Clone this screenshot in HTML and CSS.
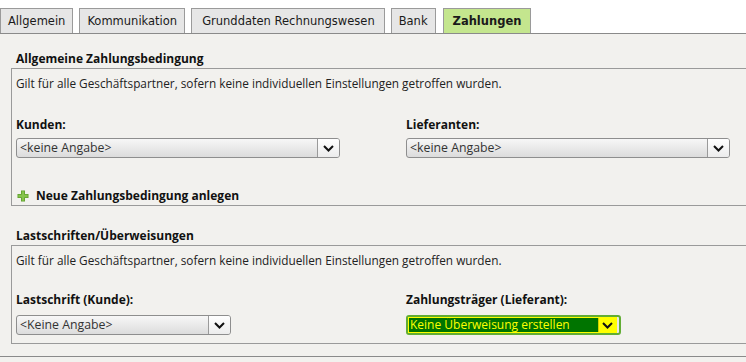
FILE: index.html
```html
<!DOCTYPE html>
<html lang="de">
<head>
<meta charset="utf-8">
<title>Zahlungen</title>
<link rel="stylesheet" href="styles.css">
</head>
<body>
<div class="tabs">
  <div class="tab">Allgemein</div>
  <div class="tab">Kommunikation</div>
  <div class="tab tab-long">Grunddaten Rechnungswesen</div>
  <div class="tab">Bank</div>
  <div class="tab active">Zahlungen</div>
</div>
<div class="panel">
  <section class="group">
    <h2 class="group-title">Allgemeine Zahlungsbedingung</h2>
    <div class="box box-first">
      <p class="note">Gilt für alle Geschäftspartner, sofern keine individuellen Einstellungen getroffen wurden.</p>
      <div class="fields">
        <div class="field">
          <div class="label">Kunden:</div>
          <div class="select wide"><span class="value">&lt;keine Angabe&gt;</span><span class="arrow"><svg width="11" height="7" viewBox="0 0 11 7"><path d="M1 1 L5.5 5.5 L10 1" fill="none" stroke="#111" stroke-width="2"/></svg></span></div>
        </div>
        <div class="field">
          <div class="label">Lieferanten:</div>
          <div class="select wide"><span class="value">&lt;keine Angabe&gt;</span><span class="arrow"><svg width="11" height="7" viewBox="0 0 11 7"><path d="M1 1 L5.5 5.5 L10 1" fill="none" stroke="#111" stroke-width="2"/></svg></span></div>
        </div>
      </div>
      <div class="add">
        <svg class="plus" width="12" height="12" viewBox="0 0 12 12"><path d="M4 0.5 H8 V4 H11.5 V8 H8 V11.5 H4 V8 H0.5 V4 H4 Z" fill="#5e9f2c"/><path d="M4.8 1.3 H7.2 V4.8 H10.7 V7.2 H7.2 V10.7 H4.8 V7.2 H1.3 V4.8 H4.8 Z" fill="#86c34c"/></svg>
        <span>Neue Zahlungsbedingung anlegen</span>
      </div>
    </div>
  </section>
  <section class="group group-second">
    <h2 class="group-title">Lastschriften/Überweisungen</h2>
    <div class="box box-second">
      <p class="note">Gilt für alle Geschäftspartner, sofern keine individuellen Einstellungen getroffen wurden.</p>
      <div class="fields">
        <div class="field">
          <div class="label">Lastschrift (Kunde):</div>
          <div class="select narrow"><span class="value">&lt;Keine Angabe&gt;</span><span class="arrow"><svg width="11" height="7" viewBox="0 0 11 7"><path d="M1 1 L5.5 5.5 L10 1" fill="none" stroke="#111" stroke-width="2"/></svg></span></div>
        </div>
        <div class="field">
          <div class="label">Zahlungsträger (Lieferant):</div>
          <div class="select narrow focus"><span class="focus-frame"><span class="value">Keine Überweisung erstellen</span><span class="arrow"><svg width="11" height="7" viewBox="0 0 11 7"><path d="M1 1 L5.5 5.5 L10 1" fill="none" stroke="#111" stroke-width="2"/></svg></span></span></div>
        </div>
      </div>
    </div>
  </section>
</div>
</body>
</html>
```
FILE: styles.css
```css
html, body {
  margin: 0;
  padding: 0;
}
body {
  background: #f2f1ee;
  font-family: "Open Sans", "Noto Sans", sans-serif;
  font-size: 11.8px;
  color: #1a1a1a;
  overflow: hidden;
}
.tabs {
  display: flex;
  gap: 6px;
  padding-top: 8px;
  background: #ffffff;
  height: 25px;
  box-sizing: content-box;
}
.tab {
  font-family: "DejaVu Sans", sans-serif;
  font-size: 11.5px;
  line-height: 24px;
  height: 25px;
  box-sizing: border-box;
  padding: 0 7px;
  border: 1px solid #9a9a9a;
  border-bottom: none;
  background: #e6e6e6;
  color: #1a1a1a;
}
.tab.tab-long {
  padding: 0 9px 0 10px;
}
.tab.active {
  background: #c4e68e;
  font-weight: bold;
  padding: 0 9px;
  margin-left: 1px;
}
.panel {
  border-top: 1px solid #8a8a8a;
  border-bottom: 1px solid #8a8a8a;
  padding: 17px 0 12px 11px;
}
.group-title {
  margin: 0 0 1px 5px;
  font-size: 12px;
  font-weight: bold;
  line-height: 16px;
  color: #111;
}
.group-second {
  margin-top: 22px;
}
.box {
  border: 1px solid #9a9a9a;
  border-right: none;
  padding: 6px 0 1px 4px;
}
.box-second {
  padding-bottom: 8px;
}
.note {
  margin: 0;
  line-height: 16px;
  color: #222;
}
.fields {
  display: grid;
  grid-template-columns: 390px 1fr;
  margin-top: 26px;
}
.box-second .fields {
  margin-top: 24px;
}
.label {
  font-size: 12px;
  font-weight: bold;
  line-height: 16px;
  color: #111;
  margin-bottom: 5px;
}
.box-second .label {
  margin-bottom: 7px;
}
.select {
  display: flex;
  height: 20px;
  box-sizing: border-box;
  border: 1px solid #8e8e8e;
  border-radius: 3px;
  background: linear-gradient(#f7f7f7, #dcdcdc);
  overflow: hidden;
}
.select.wide { width: 324px; }
.select.narrow { width: 215px; }
.value {
  flex: 1;
  padding-left: 3px;
  font-size: 12.3px;
  line-height: 18px;
  color: #333;
  white-space: nowrap;
}
.arrow {
  width: 21px;
  border-left: 1px solid #9a9a9a;
  background: linear-gradient(#ffffff, #ececec);
  display: flex;
  align-items: center;
  justify-content: center;
}
.select.focus {
  border: 2px solid #62ad34;
  border-radius: 3px;
  background: #e8e8e8;
  overflow: visible;
}
.focus-frame {
  display: flex;
  flex: 1;
  margin-right: 2px;
  border: 1px solid #ffff00;
  background: #007400;
}
.select.focus .value {
  color: #ffff00;
  line-height: 14px;
  font-size: 12px;
  padding-left: 1px;
}
.select.focus .arrow {
  background: #ffff00;
  border-left: 1px solid #cfcf00;
  width: 17px;
}
.add {
  display: flex;
  align-items: center;
  gap: 7px;
  margin-top: 30px;
  padding-left: 1px;
  font-weight: bold;
  font-size: 12px;
  line-height: 16px;
  color: #111;
}
```
